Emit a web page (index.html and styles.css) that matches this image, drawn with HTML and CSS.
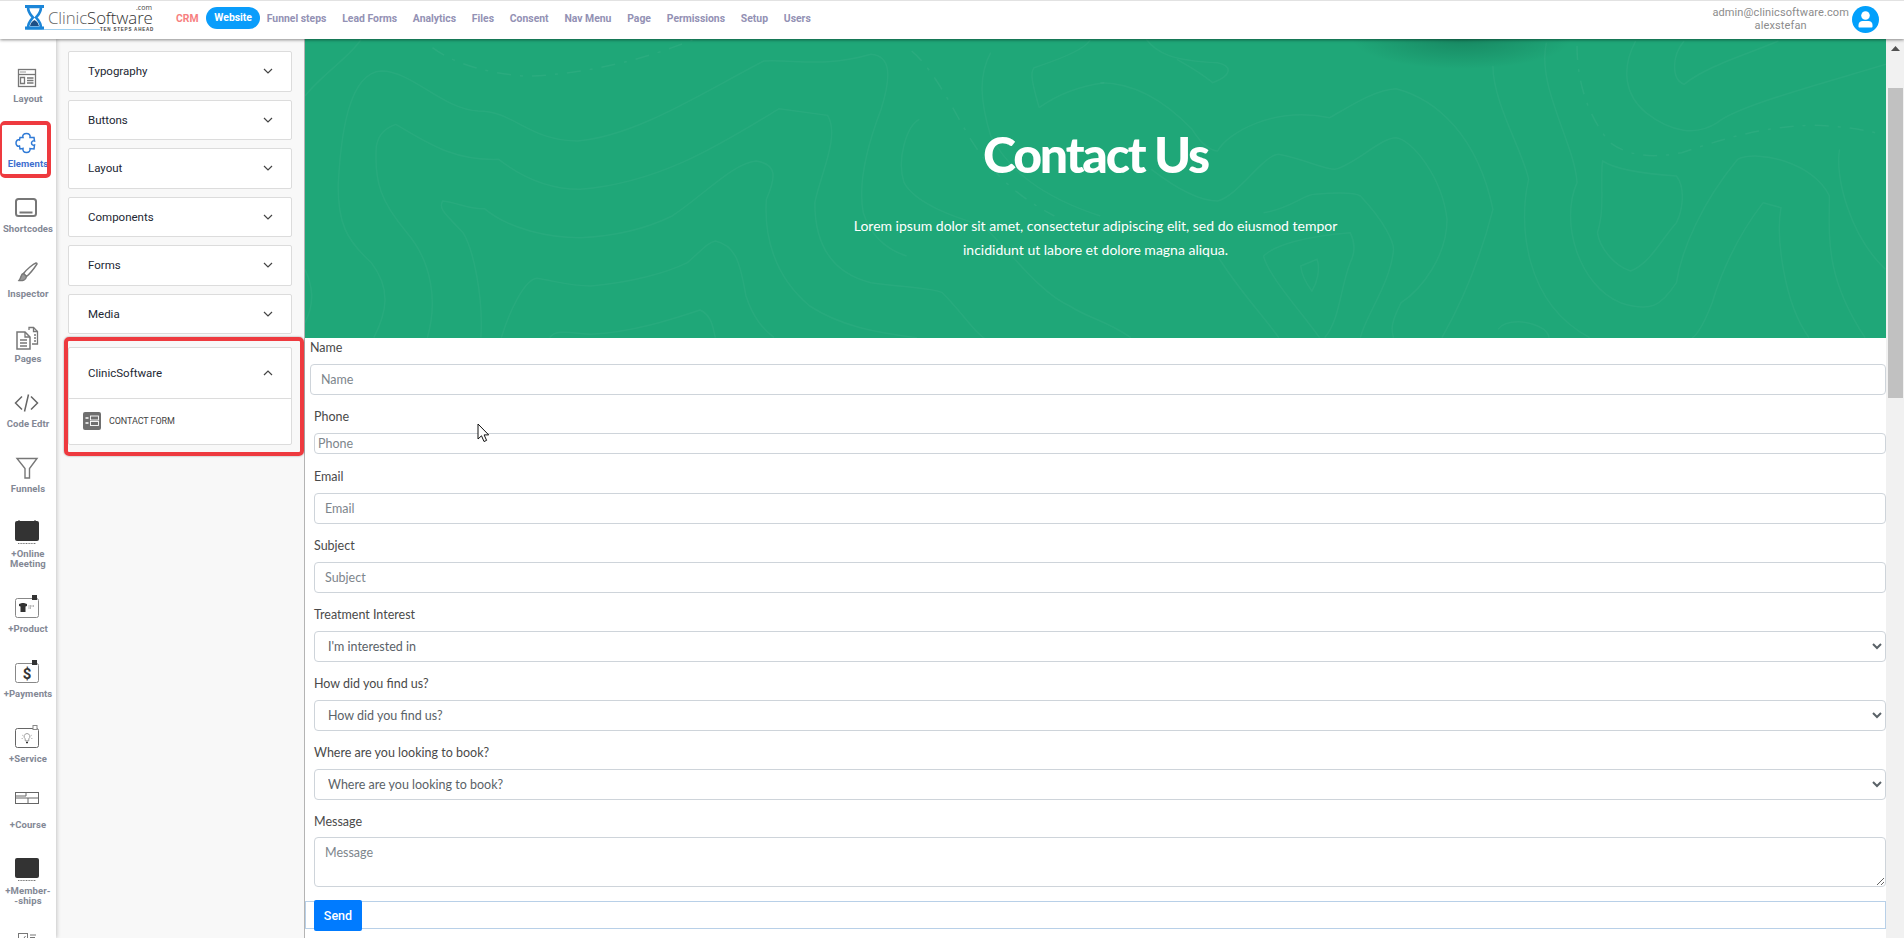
FILE: index.html
```html
<!DOCTYPE html>
<html lang="en">
<head>
<meta charset="utf-8">
<title>Website builder</title>
<link rel="stylesheet" href="styles.css">
</head>
<body>
<header class="topbar">
  <svg class="logo" width="152" height="32" viewBox="0 0 152 32">
    <path d="M0 26.500H75" stroke="#9fd0f0" stroke-width="1.200"/>
    <path d="M0 3.500H19M0 25H19" stroke="#1c86d8" stroke-width="3"/>
    <path d="M3 4c0 6 3 8 5 10.500c-2 2.500-5 4.500-5 10.500h13c0-6-3-8-5-10.500c2-2.500 5-4.500 5-10.500z" fill="none" stroke="#1c86d8" stroke-width="2.600"/>
    <path d="M5 23c1-4 3-5 4.500-6c1.500 1 3.500 2 4.500 6z" fill="#1c4f86"/>
    <text x="23" y="20.500" class="logo-name">Clinic<tspan class="logo-soft">Software</tspan></text>
    <text x="111" y="7" class="logo-com">.com</text>
    <text x="75" y="27.500" class="logo-tag">TEN STEPS AHEAD</text>
  </svg>
  <nav class="nav">
    <a class="nav-item nav-crm">CRM</a>
    <a class="nav-item nav-active">Website</a>
    <a class="nav-item">Funnel steps</a>
    <a class="nav-item">Lead Forms</a>
    <a class="nav-item">Analytics</a>
    <a class="nav-item">Files</a>
    <a class="nav-item">Consent</a>
    <a class="nav-item">Nav Menu</a>
    <a class="nav-item">Page</a>
    <a class="nav-item">Permissions</a>
    <a class="nav-item">Setup</a>
    <a class="nav-item">Users</a>
  </nav>
  <div class="user">
    <div class="user-text"><div>admin@clinicsoftware.com</div><div>alexstefan</div></div>
    <svg class="avatar" width="27" height="27" viewBox="0 0 27 27">
      <circle cx="13.500" cy="13.500" r="13.500" fill="#02a0fc"/>
      <circle cx="13.500" cy="9.500" r="4.300" fill="#fff"/>
      <path d="M6.500 20.500v-1.500c0-2.500 2-4 4-4h6c2 0 4 1.500 4 4v1.500c0 .6-.4 1-1 1h-12c-.6 0-1-.4-1-1z" fill="#fff"/>
    </svg>
  </div>
</header>

<div class="workspace">
  <aside class="rail">
    <div class="tool">
      <svg class="tool-icon" width="30" height="30" viewBox="0 0 30 30" fill="none" stroke="#777" stroke-width="1.300">
        <rect x="6.500" y="6.500" width="17" height="17"/><path d="M6.500 11.500h17"/><path d="M8.500 9h5" stroke-dasharray="1 1"/><path d="M8.500 14.500h4v6h-4zM15 15h6.500M15 17.500h6.500M15 20h6.500" />
      </svg>
      <div class="tool-label">Layout</div>
    </div>
    <div class="tool tool-flagged">
      <svg class="tool-icon" width="30" height="30" viewBox="0 0 30 30" fill="none" stroke="#2f7ad6" stroke-width="1.500">
        <path d="M11 9.500C10 7 12 5.500 14.500 5.500C17 5.500 18.500 7 18 9.500L22 9.500L22.500 13C21 12.500 19.500 13.500 19.500 15C19.500 16.700 21 17.500 22.500 17L22 21L18 20.500C18.500 23 17 24.500 14.500 24.500C12 24.500 10.500 23 11 20.500L8 21L7.500 18C5.500 19 4 17 4 15C4 13 5.500 11 7.500 12L8 9.500z"/>
      </svg>
      <div class="tool-label tool-label-on">Elements</div>
    </div>
    <div class="tool">
      <svg class="tool-icon" width="30" height="30" viewBox="0 0 30 30" fill="none" stroke="#777" stroke-width="2">
        <rect x="4" y="6" width="20" height="17" rx="2.500"/><path d="M7.500 19.500h13"/>
      </svg>
      <div class="tool-label">Shortcodes</div>
    </div>
    <div class="tool">
      <svg class="tool-icon" width="30" height="30" viewBox="0 0 30 30" fill="none" stroke="#777" stroke-width="1.400">
        <path d="M24 5c-3 1-9 6-12.500 10.500l3 3C19 15 23 9 25 6c.2-.6-.4-1.200-1-1z"/><path d="M11.500 15.500c-3 .5-2 4-4.500 7c3.500.5 7-.5 7.500-4z" fill="#999"/>
      </svg>
      <div class="tool-label">Inspector</div>
    </div>
    <div class="tool">
      <svg class="tool-icon" width="30" height="30" viewBox="0 0 30 30" fill="none" stroke="#777" stroke-width="1.300">
        <path d="M17 7V4.500h4.500l4 4v12.500H20"/><path d="M21.500 4.500v4h4M22 12h2M22 15h2M22 18h2"/>
        <path d="M5 9h8l5 5v12H5z" stroke-width="1.500"/><path d="M13 9v5h5M8 17h7M8 20h7M8 23h7"/>
      </svg>
      <div class="tool-label">Pages</div>
    </div>
    <div class="tool">
      <svg class="tool-icon" width="30" height="30" viewBox="0 0 30 30" fill="none" stroke="#666" stroke-width="1.500">
        <path d="M10 8.500L3.500 15l6.500 6.500M19 8.500L25.500 15L19 21.500M16.500 6.500L12.500 23.500"/>
      </svg>
      <div class="tool-label">Code Edtr</div>
    </div>
    <div class="tool">
      <svg class="tool-icon" width="30" height="30" viewBox="0 0 30 30" fill="none" stroke="#777" stroke-width="1.400">
        <path d="M5 5.500h20l-7.500 10v9.500h-4.500V15.500z"/>
      </svg>
      <div class="tool-label">Funnels</div>
    </div>
    <div class="tool tool-tall">
      <svg class="tool-icon" width="30" height="30" viewBox="0 0 30 30">
        <rect x="3" y="3" width="24" height="20" rx="2" fill="#333"/><path d="M7 3V2M23 3V2" stroke="#333"/><path d="M6 25.500h18" stroke="#777" stroke-dasharray="1 .6" stroke-width="1.200"/>
      </svg>
      <div class="tool-label">+Online<br>Meeting</div>
    </div>
    <div class="tool">
      <svg class="tool-icon" width="30" height="30" viewBox="0 0 30 30" fill="none">
        <rect x="3.500" y="5.500" width="23" height="19" rx="2" stroke="#888"/>
        <path d="M20 2h5v5h-5z" fill="#333"/>
        <path d="M7 11l3-1h2l3 1v2l-1.500 .5V19H8.500v-5.500L7 13z" fill="#333"/><path d="M16.500 13h6M16.500 15h3" stroke="#777" stroke-dasharray="1 .5"/>
      </svg>
      <div class="tool-label">+Product</div>
    </div>
    <div class="tool">
      <svg class="tool-icon" width="30" height="30" viewBox="0 0 30 30" fill="none">
        <rect x="3.500" y="5.500" width="23" height="19" rx="2" stroke="#888"/>
        <path d="M20 2h5v5h-5z" fill="#333"/>
        <text x="15" y="20.500" class="dollar">$</text>
      </svg>
      <div class="tool-label">+Payments</div>
    </div>
    <div class="tool tool-plus2">
      <svg class="tool-icon" width="30" height="30" viewBox="0 0 30 30" fill="none">
        <rect x="3.500" y="5.500" width="23" height="19" rx="2" stroke="#666"/>
        <rect x="21" y="2.500" width="4" height="4" fill="#fff" stroke="#888"/>
        <path d="M15 10.500a3 3 0 0 1 1.800 5.300v2h-3.600v-2A3 3 0 0 1 15 10.500z" stroke="#888" stroke-width=".8"/>
        <path d="M14 19.500h2" stroke="#333" stroke-width="1.400"/><path d="M10 12l1.500 1M20 12l-1.500 1M9.500 15.500h1.500M19 15.500h1.500" stroke="#aaa" stroke-width=".7"/>
      </svg>
      <div class="tool-label">+Service</div>
    </div>
    <div class="tool">
      <svg class="tool-icon tool-icon-up" width="30" height="30" viewBox="0 0 30 30" fill="none" stroke="#666">
        <rect x="3.500" y="7.500" width="23" height="11"/><path d="M3.500 13h23M14 7.500v3.500h-10M16 13v5.500"/>
      </svg>
      <div class="tool-label tool-label-low">+Course</div>
    </div>
    <div class="tool tool-tall">
      <svg class="tool-icon" width="30" height="30" viewBox="0 0 30 30">
        <rect x="3" y="3" width="24" height="20" rx="2" fill="#333"/><path d="M6 25.500h18" stroke="#777" stroke-dasharray="1 .6" stroke-width="1.200"/>
      </svg>
      <div class="tool-label">+Member-<br>-ships</div>
    </div>
    <div class="tool tool-last">
      <svg class="tool-icon" width="30" height="30" viewBox="0 0 30 30" fill="none" stroke="#777">
        <rect x="6.500" y="5.500" width="9" height="9"/><path d="M8.500 10l2 2l3-4M18 7h6M18 9.500h5"/>
      </svg>
    </div>
  </aside>

  <section class="panel">
    <div class="card"><div class="card-head"><span>Typography</span><svg class="chev" width="10" height="6" viewBox="0 0 10 6"><path d="M1 1l4 4l4-4"/></svg></div></div>
    <div class="card"><div class="card-head"><span>Buttons</span><svg class="chev" width="10" height="6" viewBox="0 0 10 6"><path d="M1 1l4 4l4-4"/></svg></div></div>
    <div class="card"><div class="card-head"><span>Layout</span><svg class="chev" width="10" height="6" viewBox="0 0 10 6"><path d="M1 1l4 4l4-4"/></svg></div></div>
    <div class="card"><div class="card-head"><span>Components</span><svg class="chev" width="10" height="6" viewBox="0 0 10 6"><path d="M1 1l4 4l4-4"/></svg></div></div>
    <div class="card"><div class="card-head"><span>Forms</span><svg class="chev" width="10" height="6" viewBox="0 0 10 6"><path d="M1 1l4 4l4-4"/></svg></div></div>
    <div class="card"><div class="card-head"><span>Media</span><svg class="chev" width="10" height="6" viewBox="0 0 10 6"><path d="M1 1l4 4l4-4"/></svg></div></div>
    <div class="card card-open">
      <div class="card-head card-head-open"><span>ClinicSoftware</span><svg class="chev" width="10" height="6" viewBox="0 0 10 6"><path d="M1 5l4-4l4 4"/></svg></div>
      <div class="card-body">
        <svg width="18" height="18" viewBox="0 0 18 18">
          <rect width="18" height="18" rx="2" fill="#6f6f6f"/>
          <path d="M2.500 6h3M2.500 11h3" stroke="#fff" stroke-width="1.500"/>
          <rect x="7.500" y="4" width="8" height="4" fill="none" stroke="#fff" stroke-width=".9"/>
          <rect x="7.500" y="9.500" width="8" height="4" fill="none" stroke="#fff" stroke-width=".9"/>
        </svg>
        <span class="card-item">CONTACT FORM</span>
      </div>
    </div>
  </section>

  <main class="page">
    <div class="hero">
      <svg class="contours" viewBox="0 9 3101 897" preserveAspectRatio="none" fill="none">
        <g class="contour-lines">
          <path d="M135 905C160 830 170 760 130 680C80 610 65 560 65 450C70 300 85 110 150 105C210 105 270 220 340 225C410 225 440 315 535 315C650 300 780 170 900 75C960 70 1020 95 1110 55C1150 60 1150 120 1130 220C1100 340 1085 450 1095 530C1110 600 1140 640 1180 660"/>
          <path d="M240 905C260 800 250 680 200 590C150 500 135 440 140 330C145 290 160 275 178 265C240 320 290 375 380 370C430 430 480 460 540 460C700 440 820 320 930 218L1025 238C1050 300 1010 420 1000 500C1000 620 1030 710 1110 740C1180 755 1230 755 1250 770C1290 830 1320 905 1340 912"/>
          <path d="M345 905C350 780 330 640 310 590C280 540 260 520 270 495C300 500 320 520 352 518C400 580 480 605 540 605C620 600 680 570 720 540C780 480 840 380 885 375C925 385 925 420 905 490C900 600 920 720 990 810C1050 870 1120 890 1200 905"/>
          <path d="M385 905C400 830 430 730 455 727C490 735 520 750 560 750C640 740 710 710 750 680C780 640 790 620 805 615C850 630 855 700 865 780C880 850 900 880 920 905"/>
          <path d="M480 905C490 880 520 890 560 895C640 890 720 850 775 822C800 840 800 880 805 905"/>
          <path d="M0 180C30 120 90 60 110 10"/>
          <path d="M0 700C15 750 20 800 0 860"/>
          <path d="M1440 215C1430 160 1420 110 1430 95C1480 70 1530 40 1540 12M1440 215C1480 170 1520 150 1568 140"/>
          <path d="M1205 250C1180 270 1160 370 1175 440C1200 510 1290 550 1330 570C1380 640 1440 770 1500 810C1540 850 1568 850 1620 905"/>
          <path d="M1345 50C1320 120 1325 200 1345 300C1380 400 1440 480 1560 540"/>
          <path d="M1650 10C1670 50 1700 75 1790 80C1820 90 1818 120 1780 140C1765 120 1745 100 1710 70"/>
          <path d="M1560 140C1630 140 1690 200 1740 280C1760 330 1780 345 1790 345C1810 290 1900 210 2010 245C2050 210 2100 160 2140 158C2220 190 2300 300 2330 520C2310 640 2280 770 2230 905"/>
          <path d="M1660 400C1720 470 1760 495 1790 495C1830 480 1880 355 1910 355C1960 370 2000 400 2020 400C2060 385 2110 305 2140 305C2170 310 2230 420 2240 550C2240 660 2190 760 2150 800C2130 860 2130 880 2135 905"/>
          <path d="M1880 530C1930 520 1960 475 1980 475C2020 470 2060 470 2070 480C2120 560 2135 620 2135 640C2130 740 2080 840 2070 905"/>
          <path d="M1880 660C1900 630 1960 600 2050 590C2060 620 2060 650 2050 680C2030 760 2030 850 2000 905"/>
          <path d="M1790 660C1830 760 1880 840 1910 905M1880 660C1890 720 1950 820 1990 905"/>
          <path d="M1953 690L1985 670C1992 700 1985 740 1975 765C1965 745 1955 720 1953 690z"/>
          <path d="M2330 90C2330 200 2390 350 2400 430C2380 560 2390 800 2520 905"/>
          <path d="M2435 20C2415 150 2490 320 2495 440C2460 560 2500 750 2580 800C2640 830 2660 810 2690 740C2700 640 2740 500 2810 370C2850 340 2960 380 2990 480C2990 600 2980 720 3060 905"/>
          <path d="M2610 15C2580 100 2590 180 2630 230C2680 290 2730 300 2770 260C2810 210 2960 150 3101 85"/>
          <path d="M2705 15C2680 60 2680 130 2705 145C2750 90 2820 60 2890 15"/>
          <path d="M2545 375C2560 390 2590 410 2690 420C2710 460 2700 530 2690 560C2660 610 2640 680 2600 705C2570 690 2540 640 2535 590C2550 520 2540 440 2545 375z"/>
          <path d="M2860 500L2895 515C2885 600 2900 800 2950 905M2860 500C2810 600 2780 700 2760 800C2740 880 2725 905 2720 905"/>
          <path d="M3010 340C3000 420 3030 600 3100 700"/>
          <path d="M2340 880C2355 850 2400 850 2430 880C2440 895 2440 905 2440 905"/>
        </g>
        <g class="contour-dash">
          <path d="M250 35C280 70 340 110 430 120C520 120 640 80 720 35L760 12"/>
          <path d="M1190 45C1240 110 1280 250 1310 320C1360 440 1420 500 1470 540"/>
          <path d="M2495 30C2495 120 2510 230 2560 320C2600 365 2650 365 2700 350C2780 310 2860 270 2960 268C3010 270 3060 280 3090 295"/>
        </g>
      </svg>
      <div class="hero-shade"></div>
      <h1 class="hero-title">Contact Us</h1>
      <p class="hero-text">Lorem ipsum dolor sit amet, consectetur adipiscing elit, sed do eiusmod tempor<br>incididunt ut labore et dolore magna aliqua.</p>
    </div>

    <form class="form">
      <div class="field field-name">
        <label class="field-label">Name</label>
        <input class="control" type="text" placeholder="Name">
      </div>
      <div class="field field-phone">
        <label class="field-label">Phone</label>
        <input class="control control-thin" type="text" placeholder="Phone">
      </div>
      <div class="field">
        <label class="field-label">Email</label>
        <input class="control" type="text" placeholder="Email">
      </div>
      <div class="field">
        <label class="field-label">Subject</label>
        <input class="control" type="text" placeholder="Subject">
      </div>
      <div class="field">
        <label class="field-label">Treatment Interest</label>
        <select class="control control-select"><option>I'm interested in</option></select>
      </div>
      <div class="field">
        <label class="field-label">How did you find us?</label>
        <select class="control control-select"><option>How did you find us?</option></select>
      </div>
      <div class="field">
        <label class="field-label">Where are you looking to book?</label>
        <select class="control control-select"><option>Where are you looking to book?</option></select>
      </div>
      <div class="field field-message">
        <label class="field-label field-label-tight">Message</label>
        <textarea class="control control-area" placeholder="Message"></textarea>
      </div>
      <div class="send-row"><button class="send" type="button">Send</button></div>
    </form>

    <svg class="cursor" width="14" height="20" viewBox="0 0 14 20">
      <path d="M1 1v15l3.500-3.200l2.500 5.700l2.600-1.100l-2.500-5.500h4.600z" fill="#fff" stroke="#111" stroke-width="1"/>
    </svg>
  </main>

  <div class="scrollbar">
    <svg class="scroll-up" width="9" height="5" viewBox="0 0 9 5"><path d="M4.500 0L9 5H0z" fill="#505050"/></svg>
    <div class="scroll-thumb"></div>
  </div>
</div>
</body>
</html>
```
FILE: styles.css
```css
*, *::after { box-sizing: border-box; }
html, body { margin: 0; height: 100%; overflow: hidden; }
body { font-family: "Roboto", "Liberation Sans", sans-serif; background: #fff; display: flex; flex-direction: column; height: 938px; }

.topbar { height: 39px; flex: none; display: flex; align-items: center; padding-left: 25px; background: #fff; border-top: 1px solid #e2e2e2; box-shadow: 0 1px 3px rgba(0,0,0,.45); position: relative; z-index: 5; }
.logo { flex: none; margin-top: -3px; overflow: visible; }
.logo-name { font: 300 16.800px "Open Sans", sans-serif; fill: #666; letter-spacing: -.1px; }
.logo-soft { fill: #333; }
.logo-com { font: 400 7px "Open Sans", sans-serif; fill: #444; }
.logo-tag { font: 700 4.500px "Liberation Sans", sans-serif; fill: #444; letter-spacing: .8px; }
.nav { display: flex; align-items: center; gap: 15.800px; font-size: 10.400px; font-weight: 700; color: #9391b4; margin: -4px 0 0 -1px; }
.nav-item { white-space: nowrap; }
.nav-crm { color: #f77f7f; margin-right: -8px; }
.nav-active { background: #0a9dfb; color: #fff; border-radius: 12px; padding: 0 8px; line-height: 22px; margin-right: -9px; }
.user { margin-left: auto; display: flex; align-items: center; padding-right: 25px; margin-top: -1px; }
.user-text { text-align: center; font-size: 11px; line-height: 13px; letter-spacing: .12px; color: #8c8c8c; margin: -2px 3px 0 0; }

.workspace { flex: 1; display: flex; min-height: 0; }

.rail { width: 56px; flex: none; background: #fff; box-shadow: 1px 0 4px rgba(0,0,0,.2); padding-top: 22px; overflow: hidden; position: relative; z-index: 2; }
.tool { height: 65px; display: flex; flex-direction: column; align-items: center; position: relative; padding-top: 2px; }
.tool-icon { display: block; flex: none; margin-left: -2px; }
.tool-label { font-size: 9.500px; font-weight: 700; letter-spacing: .1px; line-height: 10px; margin-top: 1px; text-align: center; color: #838895; white-space: nowrap; }
.tool-label-on { color: #3f6fcf; }
.tool-label-low { margin-top: 0; }
.tool-tall { height: 75px; }
.tool-plus2 { height: 67px; }
.tool-icon-up { margin-top: -5px; margin-bottom: 5px; }
.tool-last { margin-top: -2px; }
.tool-flagged::after { content: ""; position: absolute; left: 0; top: -5px; width: 51px; height: 57px; border: 4px solid #ee3a3f; border-left-width: 2px; border-radius: 5px; }
.dollar { font: 700 15px "Roboto", sans-serif; fill: #333; text-anchor: middle; }

.panel { width: 249px; flex: none; background: #f8f8f8; padding: 12px 12px 0; border-right: 1px solid #b4b4b4; }
.card { background: #fff; border: 1px solid #dcdcdc; border-radius: 2px; height: 40.500px; margin-bottom: 8px; }
.card-head { height: 100%; display: flex; align-items: center; justify-content: space-between; padding: 0 18px 0 19px; font-size: 11.500px; font-weight: 400; color: #222733; }
.chev { fill: none; stroke: #444; stroke-width: 1.200; }
.card-open { height: 98px; margin-top: 13px; position: relative; }
.card-open::after { content: ""; position: absolute; left: -5px; right: -13px; top: -11px; bottom: -12px; border: 4px solid #ee3a3f; border-radius: 5px; box-shadow: 0 0 2px rgba(0,0,0,.4); pointer-events: none; }
.card-head-open { height: 51px; border-bottom: 1px solid #dcdcdc; }
.card-body { display: flex; align-items: center; gap: 8px; padding: 13px 14px; }
.card-item { font-size: 9px; color: #444; letter-spacing: -.1px; }

.page { flex: 1; min-width: 0; display: flex; flex-direction: column; position: relative; background: #fff; }
.hero { height: 299px; flex: none; background: #1fa778; color: #fff; text-align: center; position: relative; overflow: hidden; padding-top: 85px; }
.contours { position: absolute; inset: 0; width: 100%; height: 100%; }
.contour-lines path, .contour-dash path { stroke: rgba(255,255,255,.04); stroke-width: 1.500; vector-effect: non-scaling-stroke; }
.contour-dash path { stroke-dasharray: 14 9 3 9; stroke: rgba(255,255,255,.05); }
.hero-shade { position: absolute; left: 1047px; top: -30px; width: 220px; height: 60px; border-radius: 50%; background: radial-gradient(closest-side, rgba(0,40,30,.24), rgba(0,40,30,0)); }
.hero-title { position: relative; margin: 0; font: 900 50px/60px "Lato", sans-serif; letter-spacing: -2.200px; }
.hero-text { position: relative; margin: 30px 0 0; font: 400 14px/24px "Lato", sans-serif; letter-spacing: 0; }

.form { padding: 0 0 0 9px; display: flex; flex-direction: column; font-family: "Lato", sans-serif; }
.field { margin-bottom: 12px; }
.field-name { margin-left: -4px; margin-bottom: 12px; }
.field-phone { margin-bottom: 13px; }
.field-label { display: block; font-size: 12.500px; line-height: 20px; margin-bottom: 6px; color: #4a4a4a; }
.field-label-tight { margin-bottom: 5px; }
.control { display: block; width: 100%; height: 31px; border: 1px solid #ced4da; border-radius: 4px; padding: 0 10px; font: 400 12.500px "Lato", sans-serif; color: #5a6268; background: #fff; outline: none; }
.control::placeholder { color: #7d858c; }
.control-thin { height: 21px; padding: 0 3px; }
.control-select { padding: 0 9px; }
.control-area { height: 50px; padding-top: 7px; resize: vertical; }
.field-message { margin-bottom: 14px; }
.send-row { margin-left: -9px; height: 28px; border: 1px solid #b8d0e8; display: flex; align-items: center; padding-left: 8px; }
.send { height: 31px; width: 48px; border: 0; border-radius: 2px; background: #007bff; color: #fff; font: 500 12.500px "Roboto", sans-serif; }

.cursor { position: absolute; left: 172px; top: 384px; }

.scrollbar { width: 18px; flex: none; background: #f1f1f1; padding-top: 7px; position: relative; z-index: 1; }
.scroll-up { display: block; margin: 0 auto 37px; }
.scroll-thumb { width: 15px; height: 310px; margin-left: 2px; background: #c1c1c1; }
```
